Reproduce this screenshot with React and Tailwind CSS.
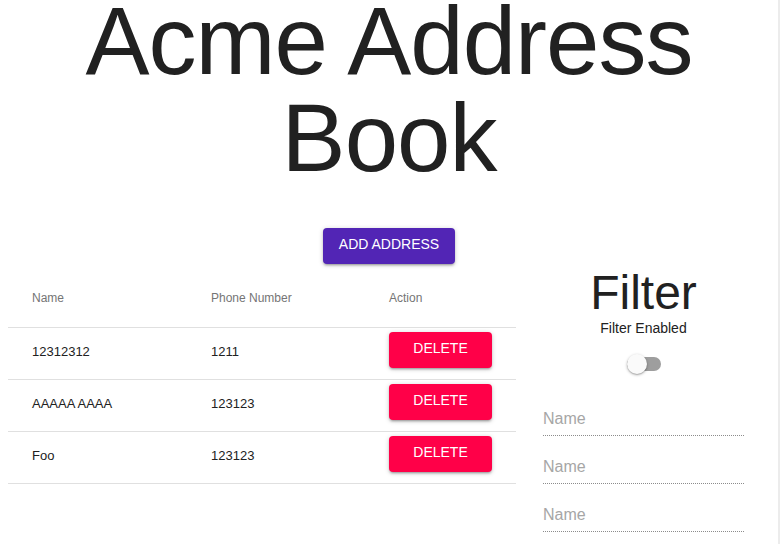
const rows = [
  { name: '12312312', phone: '1211' },
  { name: 'AAAAA AAAA', phone: '123123' },
  { name: 'Foo', phone: '123123' },
]

const btnShadow =
  'shadow-[0_1px_5px_0_rgba(0,0,0,0.2),0_2px_2px_0_rgba(0,0,0,0.14),0_3px_1px_-2px_rgba(0,0,0,0.12)]'

function AddressTable() {
  return (
    <div className="ml-[8px] mt-[8px] w-[508px] text-[#212121]">
      <div className="flex h-[56px] items-center border-b border-[#e0e0e0] pb-[4px] text-[12px] text-[#757575]">
        <div className="w-[179px] pl-[24px]">Name</div>
        <div className="w-[178px] pl-[24px]">Phone Number</div>
        <div className="flex-1 pl-[24px]">Action</div>
      </div>
      {rows.map((r, i) => (
        <div key={i} className="flex h-[52px] items-center border-b border-[#e0e0e0] text-[13px]">
          <div className="w-[179px] pb-[4px] pl-[24px]">{r.name}</div>
          <div className="w-[178px] pb-[4px] pl-[24px]">{r.phone}</div>
          <div className="flex-1 pl-[24px]">
            <button className={`mb-[7px] h-[36px] w-[103px] rounded-[4px] bg-[#ff0048] pb-[4px] text-[14px] text-white ${btnShadow}`}>
              DELETE
            </button>
          </div>
        </div>
      ))}
    </div>
  )
}

function FilterPanel() {
  return (
    <div className="flex w-[255px] flex-col items-center text-[#212121]">
      <div className="mt-[5px] text-[48px] leading-[48px]">Filter</div>
      <div className="mt-[1px] text-[14px] leading-[20px]">Filter Enabled</div>
      <div className="relative mt-[19px] h-[14px] w-[34px] rounded-full bg-[#9e9e9e]">
        <div className="absolute left-0 top-[-3px] h-[20px] w-[20px] rounded-full bg-[#fafafa] shadow-[0_1px_3px_0_rgba(0,0,0,0.3),0_1px_1px_0_rgba(0,0,0,0.14)]" />
      </div>
      <div className="mt-[38px] flex flex-col gap-[21px]">
        {[0, 1, 2].map((i) => (
          <input
            key={i}
            disabled
            placeholder="Name"
            className="block w-[201px] border-b border-dotted border-[#8c8c8c] bg-transparent pb-[7px] text-[16px] leading-[19px] outline-none placeholder:text-[#a6a6a6]"
          />
        ))}
      </div>
    </div>
  )
}

export default function App() {
  return (
    <div className="flex h-[544px] w-[780px] overflow-hidden bg-white font-['Liberation_Sans',Arial,sans-serif]">
      <div className="flex w-[778px] flex-col">
        <h1 className="mt-[-8px] text-center text-[96px] leading-[97px] tracking-[-1px] text-[#212121]">
          Acme Address
          <br />
          Book
        </h1>
        <div className="mt-[42px] flex justify-center">
          <button className={`h-[36px] rounded-[4px] bg-[#5225b5] px-[16px] pb-[4px] text-[14px] text-white ${btnShadow}`}>
            ADD ADDRESS
          </button>
        </div>
        <div className="flex">
          <AddressTable />
          <FilterPanel />
        </div>
      </div>
      <div className="h-full w-[2px] bg-[#ececec]" />
    </div>
  )
}
